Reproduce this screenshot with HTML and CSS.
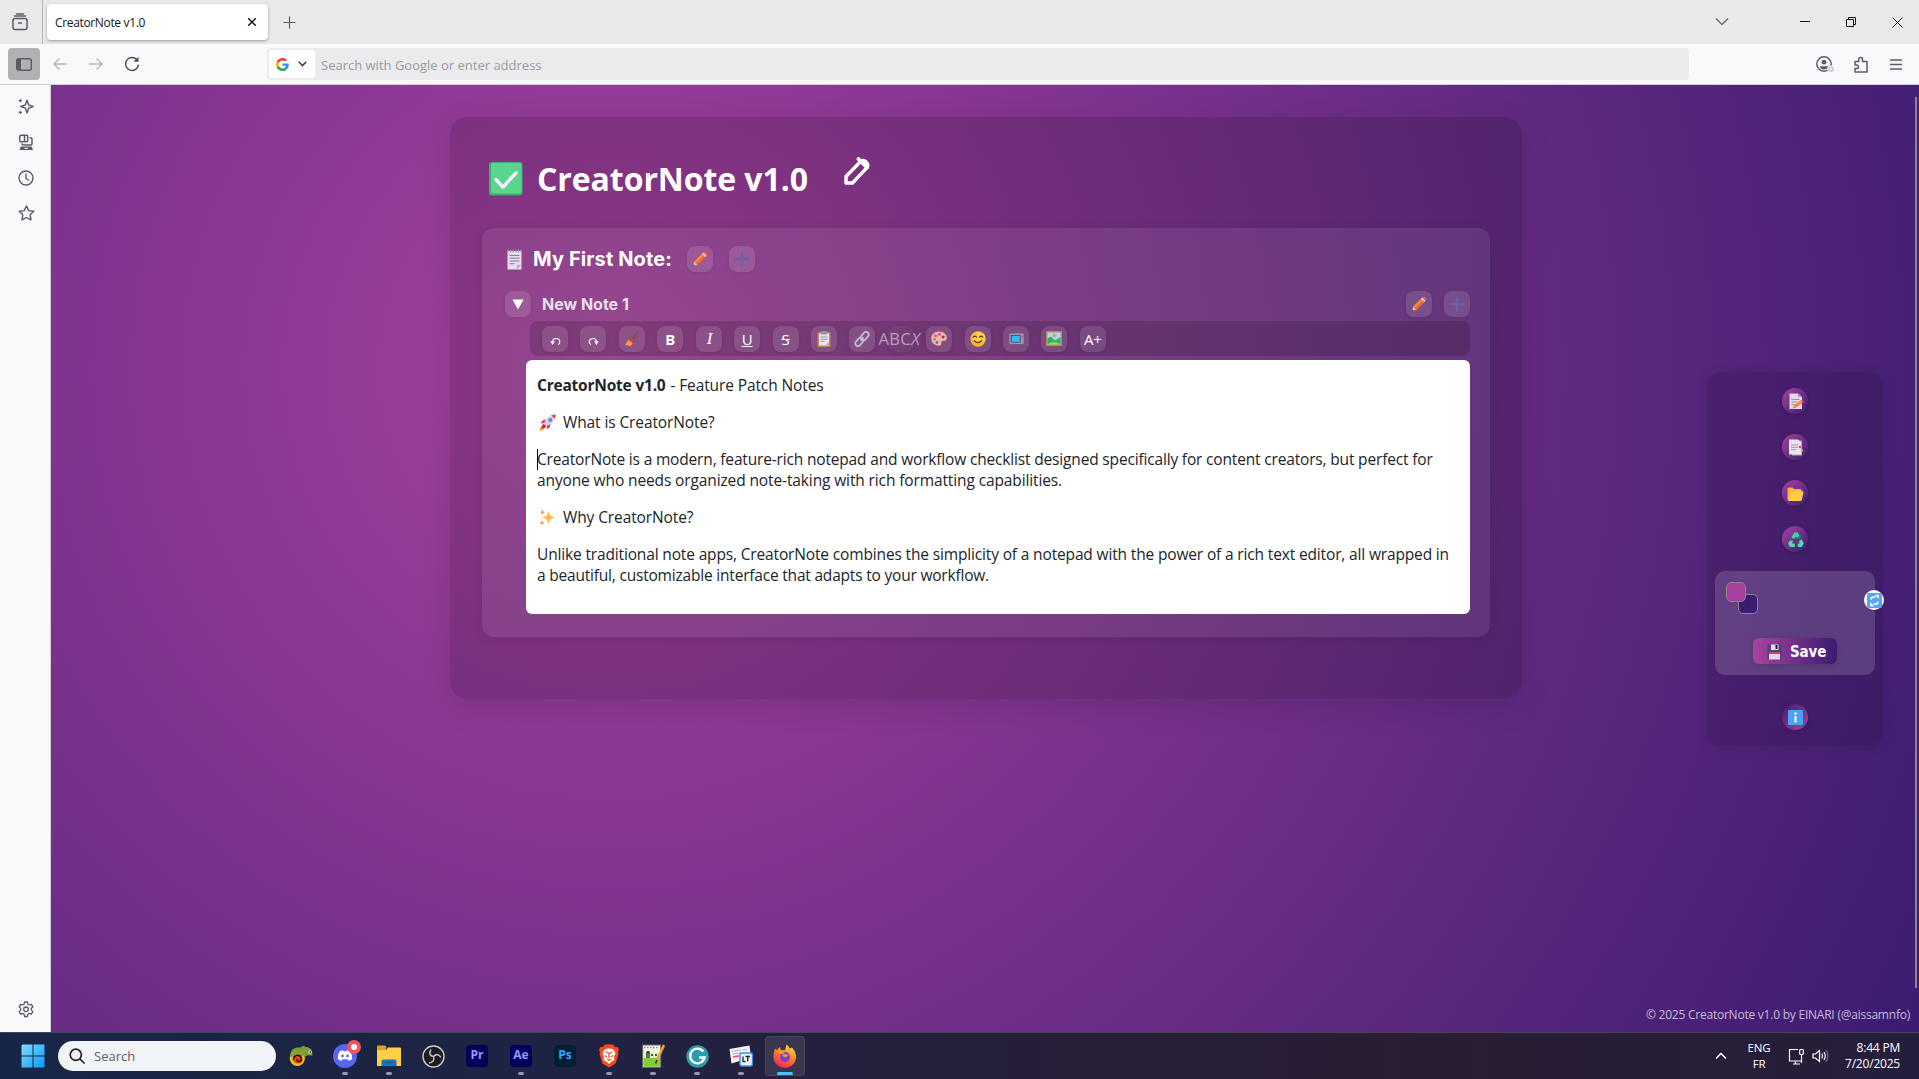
FILE: index.html
```html
<!DOCTYPE html>
<html lang="en">
<head>
<meta charset="utf-8">
<title>CreatorNote v1.0</title>
<link rel="stylesheet" href="styles.css">
</head>
<body>
<svg width="0" height="0" class="defs">
  <defs>
    <symbol id="pencil" viewBox="0 0 16 16"><path d="M1 15l1.200-4.400 3.300 3.200z" fill="#f5c08a"/><path d="M2.200 10.600L10 2.800l3.300 3.300-7.800 7.700z" fill="#ff8a3c"/><path d="M3.800 12.200l7.900-7.800 1.600 1.700-7.800 7.700z" fill="#e86c22"/><path d="M10 2.800l1.300-1.300 3.300 3.300-1.300 1.300z" fill="#e6dbe8"/><path d="M11.300 1.500c1-1 2-1 2.900-.2.900.9 1.200 2 .4 3.500z" fill="#fb5a55"/><path d="M1 15l.5-1.700 1.200 1.200z" fill="#3a2740"/></symbol>
    <symbol id="plus" viewBox="0 0 16 16"><path d="M8 1.500v13M1.500 8h13" stroke="#6a62a8" stroke-width="2.300" stroke-linecap="round"/></symbol>
  </defs>
</svg>
<header class="tabbar">
  <div class="tab-tools"><svg width="16" height="18" viewBox="0 0 16 18" fill="none" stroke="#5b5b66" stroke-width="1.500" stroke-linecap="round"><rect x="1" y="5.500" width="14" height="11" rx="2"/><path d="M2.500 3h11M4.500 .9h7M6.500 10h3"/></svg></div>
  <div class="tab"><span class="tab-title">CreatorNote v1.0</span><svg width="10" height="10" viewBox="0 0 10 10" stroke="#15141a" stroke-width="1.500"><path d="M1.200 1.200l7.600 7.600M8.800 1.200L1.200 8.800"/></svg></div>
  <svg class="new-tab" width="13" height="13" viewBox="0 0 13 13" stroke="#5b5b66" stroke-width="1.200"><path d="M6.500 .5v12M.5 6.500h12"/></svg>
  <div class="win-ctl">
    <svg width="14" height="10" viewBox="0 0 14 10" fill="none" stroke="#6b6b75" stroke-width="1.400"><path d="M1 1.500l6 6 6-6"/></svg>
    <svg class="c-min" width="10" height="10" viewBox="0 0 10 10" stroke="#15141a"><path d="M0 4.500h10"/></svg>
    <svg class="c-max" width="11" height="11" viewBox="0 0 11 11" fill="none" stroke="#15141a"><path d="M.5 2.500h7v7h-7zM2.500 2.500v-2h7v7h-2"/></svg>
    <svg class="c-close" width="11" height="11" viewBox="0 0 11 11" stroke="#15141a"><path d="M.5 .5l10 10M10.500 .5l-10 10"/></svg>
  </div>
</header>
<nav class="navbar">
  <div class="side-toggle"><svg width="16" height="13" viewBox="0 0 16 13"><rect x=".7" y=".7" width="14.600" height="11.600" rx="2" fill="none" stroke="#5b5b66" stroke-width="1.400"/><path d="M1 1h4v11H1z" fill="#5b5b66"/></svg></div>
  <svg class="back" width="14" height="12" viewBox="0 0 14 12" fill="none" stroke="#b5b5bb" stroke-width="1.400"><path d="M14 6H1M6.500 .6L1 6l5.500 5.400"/></svg>
  <svg class="fwd" width="14" height="12" viewBox="0 0 14 12" fill="none" stroke="#b5b5bb" stroke-width="1.400"><path d="M0 6h13M7.500 .6L13 6l-5.500 5.400"/></svg>
  <svg class="reload" width="16" height="16" viewBox="0 0 16 16" fill="none" stroke="#4c4c57" stroke-width="1.400"><path d="M12.600 3.400A6.500 6.500 0 1 0 14.500 8.600"/><path d="M14.500 .8v5h-5z" fill="#4c4c57" stroke="none"/></svg>
  <div class="urlbar">
    <div class="engine">
      <svg width="13" height="13" viewBox="0 0 48 48"><path fill="#ea4335" d="M24 9.500c3.500 0 6.700 1.200 9.200 3.600l6.900-6.900C35.900 2.400 30.500 0 24 0 14.600 0 6.500 5.400 2.600 13.200l8 6.200C12.400 13.700 17.700 9.500 24 9.500z"/><path fill="#4285f4" d="M47 24.500c0-1.600-.2-3.100-.4-4.500H24v9h12.900c-.6 3-2.300 5.500-4.800 7.200l7.700 6C44.400 38 47 31.800 47 24.500z"/><path fill="#fbbc05" d="M10.500 28.600a14.500 14.500 0 0 1 0-9.200l-8-6.200a24 24 0 0 0 0 21.600z"/><path fill="#34a853" d="M24 48c6.500 0 12-2.100 15.900-5.800l-7.700-6c-2.200 1.500-4.900 2.300-8.200 2.300-6.300 0-11.600-4.200-13.500-9.900l-8 6.200C6.500 42.600 14.600 48 24 48z"/></svg>
      <svg width="9" height="6" viewBox="0 0 9 6" fill="none" stroke="#3a3a44" stroke-width="1.500"><path d="M.7 .8l3.800 3.800L8.300 .8"/></svg>
    </div>
    <span class="placeholder">Search with Google or enter address</span>
  </div>
  <div class="nav-right">
    <svg width="19" height="17" viewBox="0 0 19 17"><circle cx="8" cy="8" r="7.200" fill="none" stroke="#5b5b66" stroke-width="1.500"/><circle cx="8" cy="6.200" r="2.400" fill="#5b5b66"/><path d="M3.800 10.200h8.400c-.4 2.200-2 3.300-4.200 3.300s-3.800-1.100-4.200-3.300z" fill="#5b5b66"/><circle cx="15" cy="13" r="3.600" fill="#f9f9fb"/><circle cx="15" cy="13" r="2.200" fill="none" stroke="#c3c3c8" stroke-width="1.300"/></svg>
    <svg width="14" height="17" viewBox="0 0 14 17" fill="none" stroke="#5b5b66" stroke-width="1.500" stroke-linejoin="round"><path d="M1 5.500h3.700V3.300a1.900 1.900 0 0 1 3.800 0v2.200H13V16H1v-3.500h1.700a1.800 1.800 0 0 0 0-3.600H1z"/></svg>
    <svg width="12" height="11" viewBox="0 0 12 11" stroke="#5b5b66" stroke-width="1.300"><path d="M0 1h12M0 5.500h12M0 10h12"/></svg>
  </div>
</nav>
<div class="content">
  <aside class="rail">
    <svg width="16" height="17" viewBox="0 0 16 17" fill="none" stroke="#5b5b66" stroke-width="1.400" stroke-linejoin="round"><path d="M9 2.200l1.600 4.600 4.600 1.700-4.600 1.700L9 14.900l-1.600-4.700-4.600-1.700 4.600-1.700z"/><path d="M2.300 1v3.200M.7 2.600h3.200M2.300 12.800V16M.7 14.400h3.200" stroke-width="1.100"/></svg>
    <svg width="16" height="17" viewBox="0 0 16 17" fill="none" stroke="#5b5b66" stroke-width="1.500"><rect x="1.700" y="1.200" width="8" height="6.500" rx="1.200"/><path d="M6.500 1v7M11.500 3.800h.7c1 0 1.800.6 1.800 1.700V9.500q0 1.500-1.500 1.500H6Q4 11 3.700 9.500"/><path d="M1.500 16l1.300-3.500h10.900L15 16z" fill="#5b5b66" stroke="none"/><path d="M6.500 14.300h3.500" stroke="#f9f9fb" stroke-width="1"/></svg>
    <svg width="16" height="16" viewBox="0 0 16 16" fill="none" stroke="#5b5b66" stroke-width="1.400"><circle cx="8" cy="8" r="7"/><path d="M8 3.500V8.500l3 2"/></svg>
    <svg width="17" height="16" viewBox="0 0 17 16" fill="none" stroke="#5b5b66" stroke-width="1.400" stroke-linejoin="round"><path d="M8.500 1l2.300 4.600 5 .7-3.600 3.500.8 5.100-4.500-2.400L4 14.900l.8-5.100L1.200 6.300l5-.7z"/></svg>
    <svg class="gear" width="16" height="17" viewBox="0 0 16 17" fill="none" stroke="#5b5b66" stroke-width="1.300" stroke-linejoin="round"><path d="M6.600 1h2.800l.5 2.200 1.400.8 2.100-.7 1.500 2.500-1.600 1.500v1.800l1.600 1.500-1.500 2.500-2.100-.7-1.400.8-.5 2.300H6.600l-.5-2.300-1.400-.8-2.100.7-1.500-2.500 1.600-1.500V7.300L1.100 5.800l1.500-2.500 2.100.7 1.400-.8z"/><circle cx="8" cy="8.300" r="2.300"/></svg>
  </aside>
  <main class="page">
    <section class="card">
      <div class="title-row">
        <svg width="34" height="34" viewBox="0 0 34 34"><rect width="33.500" height="33.500" rx="3" fill="#3fae73"/><rect x="2" y="1" width="30.500" height="30.500" rx="2" fill="#58d68d"/><path d="M7 17.500l7 7.500L27 11" fill="none" stroke="#f7effa" stroke-width="3.400" stroke-linecap="round" stroke-linejoin="round"/></svg>
        <h1>CreatorNote v1.0</h1>
        <svg class="edit-title" width="26" height="28" viewBox="0 0 26 28" fill="none" stroke="#fff" stroke-width="3.400" stroke-linejoin="round" stroke-linecap="round"><path d="M2 26v-6.500L16.500 4.500c2-1.500 4-1 5.600.4 2 1.900 2.200 4 .6 6L8.500 26z"/><path d="M14.500 2l8.500 8.500" stroke-width="3.800"/></svg>
      </div>
      <div class="notes">
        <div class="note-row">
          <svg width="15" height="21" viewBox="0 0 15 21"><rect x=".5" y="2" width="14" height="18.500" fill="#e6dcef"/><path d="M1 .5v3M3.600 .5v3M6.200 .5v3M8.800 .5v3M11.400 .5v3M14 .5v3" stroke="#a99cb4" stroke-width="1.100"/><path d="M2.500 6.500h10M2.500 9.200h10M2.500 12h10M2.500 14.700h5" stroke="#8b7d99"/><path d="M14.500 16l-4.500 4.500V16z" fill="#bcaec8"/></svg>
          <h2>My First Note:</h2>
          <button class="ib"><svg width="16" height="16"><use href="#pencil"/></svg></button>
          <button class="ib gap16"><svg width="16" height="16"><use href="#plus"/></svg></button>
        </div>
        <div class="sub-row">
          <button class="ib"><svg width="12" height="11" viewBox="0 0 12 11"><path d="M.5 .5h11L6 10.500z" fill="#fff"/></svg></button>
          <h3>New Note 1</h3>
          <button class="ib push"><svg width="16" height="16"><use href="#pencil"/></svg></button>
          <button class="ib gap12"><svg width="16" height="16"><use href="#plus"/></svg></button>
        </div>
        <div class="toolbar">
          <button class="ib arrow"><svg width="11" height="9" viewBox="0 0 11 9" fill="none" stroke="#fff" stroke-width="1.100"><path d="M2.500 5C2.700 2.700 4.200 1.500 6 1.500c2.200 0 3.800 1.500 3.800 3.400 0 1.200-.7 2.100-1.800 2.600"/><path d="M.3 4.300h4.600L2.500 8z" fill="#fff" stroke="none"/></svg></button>
          <button class="ib arrow"><svg width="11" height="9" viewBox="0 0 11 9" fill="none" stroke="#fff" stroke-width="1.100"><path d="M8.500 5C8.300 2.700 6.800 1.500 5 1.500 2.800 1.500 1.200 3 1.200 4.900c0 1.200.7 2.100 1.800 2.600"/><path d="M10.700 4.300H6.100L8.500 8z" fill="#fff" stroke="none"/></svg></button>
          <button class="ib"><svg width="14" height="15" viewBox="0 0 14 15"><path d="M13 .7L7.500 8" stroke="#8a4f45" stroke-width="1.600"/><path d="M5 7l4 3-1.500 2.500L3 9z" fill="#c0492f"/><path d="M3.500 9l4.300 3.300L5.500 15 0 14z" fill="#ff9a4a"/></svg></button>
          <button class="ib t-b">B</button>
          <button class="ib t-i">I</button>
          <button class="ib t-u">U</button>
          <button class="ib t-s">S</button>
          <button class="ib"><svg width="14" height="16" viewBox="0 0 14 16"><rect x=".5" y="1" width="13" height="15" rx="1" fill="#c98258"/><rect x="2" y="2.500" width="10" height="12" fill="#eae2f2"/><rect x="4" y="0" width="6" height="3.500" rx="1" fill="#9a93a8"/><path d="M3.500 6h7M3.500 8.200h7M3.500 10.400h4" stroke="#9b90a8" stroke-width=".9"/><path d="M12 11v3.500H8.500z" fill="#b6a9c4"/></svg></button>
          <button class="ib"><svg width="16" height="16" viewBox="0 0 16 16" fill="none" stroke="#c3b8cf" stroke-width="1.800"><rect x="6.300" y="2.300" width="9" height="5.400" rx="2.700" transform="rotate(-50 10.800 5)"/><rect x=".7" y="8.300" width="9" height="5.400" rx="2.700" transform="rotate(-50 5.200 11)"/><path d="M6.500 9.800l3-3.600"/></svg></button>
          <button class="ib t-abc"><span>ABC<i>X</i></span></button>
          <button class="ib"><svg width="16" height="15" viewBox="0 0 16 15"><path d="M8 .5C12.500 .5 15.800 3.400 15.800 7c0 2-1.500 3-3.300 2.800-1.700-.2-2.600.6-2.300 2.200.3 1.700-.5 2.600-2.200 2.600C3.500 14.500 .3 11.500 .3 7.500S3.500 .5 8 .5z" fill="#ffb59c"/><circle cx="8.500" cy="3.300" r="1.500" fill="#b24fd0"/><circle cx="4.600" cy="4.800" r="1.500" fill="#f0439a"/><circle cx="3.600" cy="8.300" r="1.400" fill="#26b7c4"/><circle cx="6" cy="11.500" r="1.400" fill="#3f6df0"/><circle cx="12.200" cy="6" r="1.500" fill="#7c3a6c"/></svg></button>
          <button class="ib"><svg width="16" height="16" viewBox="0 0 16 16"><circle cx="8" cy="8" r="7.700" fill="#fcb32c"/><ellipse cx="9" cy="6.500" rx="6.300" ry="5.800" fill="#ffd049"/><path d="M3.300 6.200q1.600-2.200 3.200 0M9.500 6.200q1.600-2.200 3.200 0M4.300 9.700q3.700 4 7.400 0" fill="none" stroke="#53311f" stroke-width="1.200" stroke-linecap="round"/></svg></button>
          <button class="ib"><svg width="15" height="15" viewBox="0 0 15 15"><path d="M5 0l2.500 3L10 0M3 12.500l-1 2.200M12 12.500l1 2.200" stroke="#6e6880" fill="none"/><rect x=".3" y="2.500" width="14.400" height="10.500" rx="1" fill="#9b97a8"/><rect x="1.800" y="4" width="9.700" height="7.500" rx=".6" fill="#25456c"/><rect x="2.600" y="4.700" width="8.200" height="6.200" fill="#37b6f2"/><circle cx="13" cy="5.500" r=".8" fill="#e8456b"/></svg></button>
          <button class="ib"><svg width="16" height="15" viewBox="0 0 16 15"><rect width="16" height="15" fill="#c98258"/><rect x="1.500" y="1.500" width="13" height="12" fill="#a6dcf9"/><circle cx="8.500" cy="4.500" r="2" fill="#f5a72a"/><path d="M1.500 7.500l3.500-2 4 4 5.500-3.500v7.500h-13z" fill="#2fb365"/><path d="M1.500 13.500q6.500-4.500 13 0z" fill="#a5e04e"/></svg></button>
          <button class="ib t-a"><span>A+</span></button>
        </div>
        <article class="editor">
          <p><b class="m-b">CreatorNote v1.0</b><span class="m-f"> - Feature Patch Notes</span></p>
          <p><svg width="17" height="17" viewBox="0 0 17 17"><path d="M16.500 .5c-4 0-7 1.500-9.500 5L4.500 9l3.500 3.500 3.500-2.300C15 7.600 16.600 4.500 16.500 .5z" fill="#d9d3e4"/><path d="M16.500 .5c-1.700 0-3 .3-4.300.9l3.500 3.400c.5-1.300.8-2.700.8-4.300zM6.800 5.500C4 5.500 2.500 7 1.800 9.500l3.500-.4zM11.500 10.200c0 2.900-1.500 4.300-4 5l.5-3.500z" fill="#f0386b"/><circle cx="11.200" cy="5.900" r="2" fill="#4a8ee8"/><path d="M4.500 10.500l2 2C5.500 15 3.500 16.500 .5 16.800c.3-3 1.500-5 4-6.300z" fill="#ff9b2f"/><path d="M4.500 9.500l3 3-3.500 2.200-1.500-1.500z" fill="#c9254f"/></svg><span class="m-q">What is CreatorNote?</span></p>
          <p class="caret"><span class="m-l1">CreatorNote is a modern, feature-rich notepad and workflow checklist designed specifically for content creators, but perfect for</span><br><span class="m-l2">anyone who needs organized note-taking with rich formatting capabilities.</span></p>
          <p><svg width="17" height="17" viewBox="0 0 17 17"><path d="M9.500 1.500c.7 4 2 6 6.500 7-4.500 1-5.800 3-6.500 7-.7-4-2-6-6.500-7 4.500-1 5.800-3 6.500-7z" fill="#ffb84d"/><path d="M3.500 .5q.4 2.200 2.500 2.800-2.100.6-2.500 2.700Q3.100 3.900 1 3.300 3.100 2.700 3.500 .5zM3 11q.4 2.200 2.500 2.800-2.100.6-2.500 2.700-.4-2.100-2.500-2.700Q2.600 13.200 3 11z" fill="#ff9d5c"/></svg><span class="m-q">Why CreatorNote?</span></p>
          <p><span class="m-l3">Unlike traditional note apps, CreatorNote combines the simplicity of a notepad with the power of a rich text editor, all wrapped in</span><br><span class="m-l4">a beautiful, customizable interface that adapts to your workflow.</span></p>
        </article>
      </div>
    </section>
    <aside class="panel">
      <button class="rb"><svg width="16" height="17" viewBox="0 0 16 17"><path d="M1.500 .5h8.500l4 3.500v12h-12.500z" fill="#e2dcea"/><path d="M10 .5v3.500h4z" fill="#a79db5"/><path d="M3.500 6.500h8M3.500 9h6M3.500 11.500h4" stroke="#a095ae"/><path d="M4.500 15.500l1-3 7-5 2 2.500-7 5z" fill="#ff8a3c"/><path d="M12.500 7.500l1.500-1 2 2.300-1.500 1.200z" fill="#fb4f55"/></svg></button>
      <button class="rb"><svg width="16" height="17" viewBox="0 0 16 17"><path d="M4 1.500h10v15H4z" fill="#b4aabf"/><path d="M1 .5h9l3 3v12H1z" fill="#ece6f3"/><path d="M3 6h7M3 8.300h7M3 10.600h5" stroke="#a095ae"/><circle cx="12" cy="8" r="1.300" fill="#e8456b"/><circle cx="13.800" cy="11.500" r="1.300" fill="#f0b030"/></svg></button>
      <button class="rb"><svg class="folder" width="17" height="15" viewBox="0 0 17 15"><path d="M.5 2q0-1.500 1.500-1.500h3.500L7 2h6.500q1 0 1 1v10H.5z" fill="#f9b044"/><path d="M4.500 4.200h11q1.200 0 1 1.200l-1.700 7.600q-.2 1-1.200 1H2q-1 0-.8-1z" fill="#ffcb4d"/></svg></button>
      <button class="rb"><svg class="folder" width="16" height="16" viewBox="0 0 16 16" fill="none" stroke-width="3.400"><path d="M4.800 6.200L7.300 2.200h1.400l2 3.600" stroke="#3fd69b"/><path d="M12.300 8.300l1.500 3.200-1 1.700H9.500" stroke="#4ae0a6"/><path d="M6.800 13.200H3l-.9-1.700 1.500-3.200" stroke="#4ae0a6"/><path d="M9.200 6.300h3.500V3.500zM9.500 10.500v4.500M1.500 8.300l3.800-.3" stroke="#1f7a68" stroke-width="1.200"/></svg></button>
      <div class="theme">
        <div class="swatches"><i class="sw a"></i><i class="sw b"></i></div>
        <button class="reset"><svg width="15" height="15" viewBox="0 0 15 15"><rect width="15" height="15" rx="1.500" fill="#56a5f5"/><path d="M4 6.500Q4 4 6.500 4H8.500M11 8.500Q11 11 8.500 11H6.500" fill="none" stroke="#fff" stroke-width="1.700"/><path d="M7.800 1.700h4v4zM7.200 13.300h-4v-4z" fill="#fff"/></svg></button>
        <button class="save"><svg width="15" height="16" viewBox="0 0 15 16"><path d="M.5 .5h13l1 1V15.500H.5z" fill="#54407f"/><rect x="4" y=".5" width="7.500" height="5.500" fill="#e3ddea"/><rect x="8.500" y="1" width="2" height="4" fill="#241a3c"/><rect x="2" y="8" width="11" height="7.500" fill="#e3d9ec"/><rect x="2" y="8" width="11" height="2" fill="#e23c4f"/></svg><span>Save</span></button>
      </div>
      <button class="rb info"><svg width="15" height="15" viewBox="0 0 15 15"><rect width="15" height="15" rx="1" fill="#4ba3f5"/><path d="M7.500 6v6.500" stroke="#fff" stroke-width="2"/><circle cx="7.500" cy="3.500" r="1.300" fill="#fff"/></svg></button>
    </aside>
    <div class="copyright">© 2025 CreatorNote v1.0 by EINARI (@aissamnfo)</div>
    <div class="scroll"></div>
  </main>
</div>
<footer class="taskbar">
  <svg class="start" width="24" height="24" viewBox="0 0 24 24"><defs><linearGradient id="win" x1="0" y1="0" x2="1" y2="1"><stop offset="0" stop-color="#7fdcff"/><stop offset="1" stop-color="#1098f7"/></linearGradient></defs><path d="M1.500 .5H11.500V11.500H.5V1.500zM12.500 .5h11v11h-11zM.5 12.500h11v11H.5zM12.500 12.500h11v11h-11z" fill="url(#win)"/></svg>
  <div class="search"><svg width="16" height="16" viewBox="0 0 16 16" fill="none" stroke="#222" stroke-width="1.700" stroke-linecap="round"><circle cx="6.800" cy="6.800" r="5.600"/><path d="M11 11l4 4"/></svg><span>Search</span></div>
  <div class="apps">
    <div class="app"><svg width="24" height="22" viewBox="0 0 24 22"><path d="M1.500 9C2 4 6 2 11 2.500L15 .5l1 1.500c4 0 6.500 2 7 4.500l.5 4-5-.3-2 1.300-3-1.500z" fill="#7d9c35"/><circle cx="8.300" cy="13.500" r="7.600" fill="#e8c21c"/><path d="M.8 12C1 6.500 5 4.300 9.500 5s6 3 6 6z" fill="#8aa030"/><circle cx="8.800" cy="14" r="4.600" fill="#e8401c"/><path d="M4.500 15c-1-5.500 8-6.500 8-1 0 3.500-5 3.500-4.500.3" fill="none" stroke="#200" stroke-width="1.400"/><circle cx="21" cy="7" r="1.700" fill="#ddd"/><circle cx="21.200" cy="7" r=".8"/></svg></div>
    <div class="app on"><svg class="discord" width="28" height="28" viewBox="0 0 28 28"><circle cx="12" cy="16" r="12" fill="#5865f2"/><path d="M6.500 11.500q2-1.200 3.500-1.200l.5.900h3l.5-.9q1.500 0 3.500 1.200 2 3.500 1.700 7.500-1.700 1.600-3.700 1.800l-.9-1.600h-5.200l-.9 1.600q-2-.2-3.700-1.800-.3-4 1.700-7.500z" fill="#fff"/><circle cx="9.500" cy="16" r="1.400" fill="#5865f2"/><circle cx="14.500" cy="16" r="1.400" fill="#5865f2"/><circle cx="21" cy="7" r="7" fill="#f2555a"/><circle cx="21" cy="7" r="3" fill="#fff"/></svg></div>
    <div class="app on"><svg width="24" height="22" viewBox="0 0 24 22"><path d="M0 1.500Q0 .5 1 .5h7l2 2H9v4H0z" fill="#e0a012"/><path d="M0 5h9l2-2.500h12q1 0 1 1V21H0z" fill="#ffcf45"/><path d="M4.500 21v-4.500q0-2 2-2h11q2 0 2 2V21z" fill="#1275c8"/><path d="M8 17.500h8" stroke="#0d5596"/></svg></div>
    <div class="app"><svg width="23" height="23" viewBox="0 0 23 23"><circle cx="11.500" cy="11.500" r="10.500" fill="#1c1b20" stroke="#c9c9cd" stroke-width="1.400"/><path d="M11.500 11.500c-4-.5-4.500-4-2.500-7M11.500 11.500c2.500-3.200 6-2 7.300 1M11.500 11.500c1.500 3.800-1 6.300-4.500 6.500" fill="none" stroke="#b9b9bd" stroke-width="1.600"/></svg></div>
    <div class="app"><span class="adobe pr">Pr</span></div>
    <div class="app on"><span class="adobe ae">Ae</span></div>
    <div class="app"><span class="adobe ps">Ps</span></div>
    <div class="app on"><svg width="20" height="24" viewBox="0 0 20 24"><path d="M6 .5h8L16 3l2.500 0L20 6l-1 2 .5 2-3 9.500L10 23.500 3.500 19.500 .5 10 1 8 0 6l1.500-3L4 3z" fill="#fb4b1e"/><path d="M10 4.500l4 .5 2.500 4-1.500 4 .5 3-3 1.500L10 20l-2.500-2.500-3-1.500.5-3-1.500-4L6 5z" fill="#fff"/><path d="M7 8l3 1.500L13 8M10 9v5M6 11.500l2 1.500M14 11.500L12 13M8 15l2 1.200L12 15" stroke="#fb4b1e" stroke-width="1.300" fill="none"/></svg></div>
    <div class="app on"><svg width="23" height="24" viewBox="0 0 23 24"><rect x=".7" y="1" width="18" height="22.500" fill="#f4f6ec" stroke="#666"/><rect x="1.500" y="13" width="16.400" height="9.800" fill="#7fce2d"/><rect x="1.500" y="8" width="16.400" height="6" fill="#dcf2c0"/><path d="M5 14V8h2v6M9 11h2M13 11h2" stroke="#222" stroke-width="1.300" fill="none"/><path d="M22 1l-7 15" stroke="#e8a825" stroke-width="2.600"/><path d="M15 16l-1.500 3.500" stroke="#333" stroke-width="1.500"/><path d="M2 3.500h15" stroke="#888" stroke-dasharray="1.500 1.500" stroke-width="1.500"/></svg></div>
    <div class="app on"><svg width="23" height="23" viewBox="0 0 23 23"><circle cx="11.500" cy="11.500" r="11.200" fill="#2a9dab"/><path d="M17.300 6.500A7.300 7.300 0 1 0 18.600 12.500H13" fill="none" stroke="#fff" stroke-width="2.300"/></svg></div>
    <div class="app on"><svg width="24" height="22" viewBox="0 0 24 22"><path d="M.5 4l20-3.500 1.500 12-19.500 6z" fill="#f3f1f6"/><path d="M3 6.500l9-1.500M3.500 9l8-1.200M14 5l4-.6" stroke="#b9b3c4"/><path d="M4 12l6-1" stroke="#f04a6a" stroke-width="1.600"/><rect x="11" y="8" width="12.500" height="13" rx="2" fill="#e9f3ff" stroke="#3c8fe8" stroke-width="1.400"/><path d="M14 11.500v5h2.500M16.500 11.500h4.500M18.700 11.500v5" stroke="#222" stroke-width="1.300" fill="none"/></svg></div>
    <div class="app on active"><svg width="24" height="24" viewBox="0 0 24 24"><defs><linearGradient id="ff" x1=".8" y1="0" x2=".3" y2="1"><stop offset="0" stop-color="#ffe14a"/><stop offset=".45" stop-color="#ff8a1f"/><stop offset="1" stop-color="#f5225e"/></linearGradient></defs><path d="M2 4.500l2 1.800L6.500 3l1.500 3 4 .2L13.500 .5q2 1 3 4l2.500-1q3.500 3.500 4 8C23.500 18.500 18.500 23.700 12 23.700S.5 19 .5 12.500Q.5 8 2 4.500z" fill="url(#ff)"/><circle cx="12" cy="13" r="5" fill="#7a3fd6"/><path d="M3 8.500c3-2 5-1.500 8.500.5l-2 2.500c2 2.500 5 1.500 6-.5" fill="#ff9a24"/></svg></div>
  </div>
  <div class="tray">
    <svg width="12" height="8" viewBox="0 0 12 8" fill="none" stroke="#fff" stroke-width="1.500"><path d="M1 6.500l5-5 5 5"/></svg>
    <div class="lang">ENG<br>FR</div>
    <svg class="net" width="17" height="17" viewBox="0 0 17 17" fill="none" stroke="#fff" stroke-width="1.200"><path d="M10 1.500H1.500V13h12M5 16h7M7.500 13v3"/><rect x="11.700" y="1.500" width="3.600" height="5" rx=".8"/><path d="M13.500 6.500V15"/></svg>
    <svg class="vol" width="17" height="14" viewBox="0 0 17 14" fill="none" stroke="#fff" stroke-width="1.200"><path d="M1 5h2.500L7.500 1.500v11L3.500 9H1z"/><path d="M9.800 4.700q1.500 2.300 0 4.600M11.900 3q2.700 4 0 8"/><path d="M13.900 1.200q4 5.800 0 11.600" stroke="#77718a"/></svg>
    <div class="clock">8:44 PM<br>7/20/2025</div>
  </div>
</footer>
</body>
</html>
```
FILE: styles.css
```css
* { box-sizing: border-box; }
body { margin: 0; width: 1919px; height: 1079px; overflow: hidden; display: flex; flex-direction: column; font-family: "Open Sans", "Noto Sans", sans-serif; }
.defs { position: absolute; }
svg { display: block; flex: none; }
h1, h2, h3, p { margin: 0; }
button { border: 0; padding: 0; margin: 0; font: inherit; color: inherit; }

.tabbar { height: 44px; flex: none; background: #e9e9eb; display: flex; align-items: center; }
.tab-tools { width: 43px; height: 44px; border-right: 1px solid #b4b4b8; display: flex; align-items: center; padding-left: 12px; }
.tab { margin-left: 4px; width: 221px; height: 36px; background: #fff; border-radius: 4px; box-shadow: 0 1px 3px rgba(0,0,0,.35); display: flex; align-items: center; justify-content: space-between; padding: 0 11px 0 8px; font-size: 12px; letter-spacing: -.346px; color: #15141a; }
.new-tab { margin-left: 15px; }
.win-ctl { margin-left: auto; display: flex; align-items: center; padding-right: 16px; }
.c-min { margin-left: 71px; }
.c-max { margin-left: 36px; }
.c-close { margin-left: 35px; }

.navbar { height: 41px; flex: none; background: #f9f9fb; border-bottom: 1px solid #cfcfd4; display: flex; align-items: center; }
.side-toggle { width: 32px; height: 32px; margin-left: 8px; border-radius: 4px; background: #b1b1b4; display: flex; align-items: center; justify-content: center; }
.back { margin-left: 13px; }
.fwd { margin-left: 22px; }
.reload { margin-left: 21px; }
.urlbar { margin-left: 127px; width: 1422px; height: 32px; background: #ebebed; border-radius: 4px; display: flex; align-items: center; padding-left: 2px; }
.engine { width: 46px; height: 28px; background: #fff; border-radius: 3px; display: flex; align-items: center; gap: 9px; padding-left: 7px; }
.placeholder { margin-left: 6px; padding-top: 2px; font-size: 13px; color: #9a9aa0; white-space: nowrap; }
.nav-right { margin-left: auto; display: flex; align-items: center; padding-right: 17px; gap: 19px; }
.nav-right svg:last-child { margin-left: 3px; }

.content { flex: 1; display: flex; min-height: 0; }
.rail { width: 51px; background: #f9f9fb; border-right: 1px solid #cfcfd4; display: flex; flex-direction: column; align-items: center; gap: 19px; padding: 13px 0 14px 2px; }
.gear { margin-top: auto; }

.page { flex: 1; position: relative; background: radial-gradient(circle at 30% 30%, #a8429f, #3a1c71); }
.card { margin: 32px 0 0 399px; width: 1072px; height: 582px; padding: 0 32px; border-radius: 18px; background: rgba(0,0,0,.15); box-shadow: 0 8px 32px rgba(0,0,0,.12); color: #fff; }
.title-row { height: 111px; display: flex; padding: 45px 0 0 7px; }
h1 { margin-left: 14px; font-size: 32px; line-height: 34px; font-weight: 700; letter-spacing: -.08px; white-space: nowrap; }
.edit-title { margin: -5px 0 0 36px; }
.notes { height: 409px; border-radius: 12px; background: rgba(255,255,255,.08); box-shadow: 0 2px 12px rgba(0,0,0,.08); padding: 17px 20px 0 23px; }
.note-row { height: 28px; display: flex; align-items: center; padding-left: 2px; }
h2 { margin-left: 11px; font: 700 20px/28px Inter, sans-serif; letter-spacing: .113px; white-space: nowrap; }
.note-row .ib { margin-left: 15px; }
.note-row .gap16 { margin-left: 16px; }
.ib { width: 26px; height: 26px; border-radius: 8px; background: rgba(255,255,255,.12); box-shadow: 0 1px 4px rgba(0,0,0,.08); display: flex; align-items: center; justify-content: center; flex: none; font-size: 15px; line-height: 26px; color: #fff; }
.sub-row { margin-top: 18px; height: 26px; display: flex; align-items: center; }
h3 { margin-left: 11px; font: 700 16px/26px Inter, sans-serif; color: #eadfec; white-space: nowrap; }
.push { margin-left: auto; }
.gap12 { margin-left: 12px; }
.toolbar { margin: 4px 0 0 25px; height: 35px; border-radius: 8px; background: rgba(0,0,0,.15); display: flex; align-items: center; gap: 12.430px; padding-left: 12px; }
.arrow { padding-top: 5px; }
.t-b { font-weight: 700; font-family: "Noto Sans", sans-serif; }
.t-i { font-family: "Liberation Serif", serif; font-style: italic; font-size: 17px; padding-left: 2px; }
.t-u { text-decoration: underline; }
.t-s { text-decoration: line-through; }
.t-abc { background: rgba(255,255,255,.03); color: rgba(255,255,255,.5); font-size: 16.500px; letter-spacing: .4px; padding-right: 3px; }
.editor { margin: 4px 0 0 21px; height: 254px; border-radius: 6px; background: #fff; color: #212529; padding: 15px 11px; font-size: 15.500px; line-height: 21px; }
.editor p { margin-bottom: 16px; white-space: nowrap; }
.editor p svg { display: inline-block; vertical-align: -3px; margin: 0 7px 0 2px; }
.m-b { letter-spacing: -.211px; }
.m-f { letter-spacing: -.113px; margin-left: 1px; }
.m-q { letter-spacing: -.11px; }
.m-l1 { letter-spacing: -.169px; }
.m-l2 { letter-spacing: -.12px; }
.m-l3 { letter-spacing: -.151px; }
.m-l4 { letter-spacing: -.2px; }
.caret { position: relative; }
.caret::before { content: ""; position: absolute; left: 0; top: 0; width: 1px; height: 21px; background: #000; }

.panel { position: absolute; left: 1656px; top: 287px; width: 176px; height: 374px; border-radius: 14px; background: rgba(0,0,0,.12); box-shadow: 0 2px 14px rgba(0,0,0,.1); display: flex; flex-direction: column; align-items: center; padding-top: 16px; gap: 20px; }
.rb { width: 26px; height: 26px; border-radius: 50%; background: linear-gradient(135deg, #a8429f, #3a1c71); box-shadow: 0 1px 4px rgba(0,0,0,.2); display: flex; align-items: center; justify-content: center; flex: none; padding-left: 1px; }
.folder { margin-top: 2px; }
.info { margin-top: 9px; background: linear-gradient(315deg, #a8429f, #3a1c71); }
.theme { position: relative; margin-top: -1px; width: 160px; height: 104px; border-radius: 10px; background: rgba(255,255,255,.15); padding: 11px 0 0 11px; color: #fff; }
.swatches { display: flex; height: 56px; }
.sw { width: 20px; height: 20px; border: 1px solid #8a8488; border-radius: 5px; }
.a { background: #a8429f; z-index: 1; }
.b { background: #3a1c71; margin: 12px 0 0 -8px; }
.reset { position: absolute; left: 149px; top: 19px; width: 20px; height: 20px; border-radius: 50%; background: #fff; display: flex; align-items: center; justify-content: center; padding-top: 1px; }
.save { margin-left: 27px; width: 84px; height: 26px; border-radius: 6px; background: linear-gradient(90deg, #a8429f, #3a1c71); display: flex; align-items: center; padding: 1px 0 0 14px; gap: 8px; box-shadow: 0 1px 6px rgba(0,0,0,.15); font: 700 15px/28px "DejaVu Sans Condensed", "DejaVu Sans", sans-serif; font-stretch: condensed; letter-spacing: -.1px; color: #fff; }
.copyright { position: absolute; right: 9px; bottom: 7px; font-size: 12px; line-height: 20px; letter-spacing: -.23px; color: rgba(255,255,255,.7); white-space: nowrap; }
.scroll { position: absolute; right: 2px; top: 12px; width: 2px; height: 891px; background: #8b8590; }

.taskbar { height: 47px; flex: none; border-top: 1px solid #4a4458; background: linear-gradient(90deg, #172648, #1f2342 30%, #251f3b 45%, #2a1d33 75%, #251e3b); display: flex; align-items: center; color: #fff; }
.start { margin-left: 20.500px; }
.search { margin-left: 13.500px; width: 218px; height: 30px; border-radius: 15px; background: #f2f3f6; display: flex; align-items: center; padding-left: 11px; font-size: 13px; color: #5f5f64; }
.search span { margin-left: 9px; }
.apps { display: flex; margin-left: 5px; gap: 4px; }
.app { position: relative; width: 40px; height: 40px; border-radius: 4px; display: flex; align-items: center; justify-content: center; }
.discord { margin: -4px 0 0 4px; }
.on::after { content: ""; position: absolute; left: 17px; bottom: 1px; width: 6px; height: 3px; border-radius: 2px; background: #9a99a8; }
.active { background: rgba(255,255,255,.1); border: 1px solid rgba(255,255,255,.08); }
.active::after { left: 11px; bottom: 0; width: 16px; background: #4cc2ff; }
.adobe { width: 22px; height: 22px; border-radius: 4px; background: #00005b; color: #9999ff; font: 700 12px/20px "Open Sans", sans-serif; text-align: center; }
.ps { background: #001e36; color: #31a8ff; }
.tray { margin-left: auto; display: flex; align-items: center; padding-right: 19px; font-size: 12px; line-height: 16px; letter-spacing: -.2px; }
.lang { margin-left: 19px; text-align: center; width: 26px; font-size: 11.500px; }
.net { margin-left: 16px; }
.vol { margin-left: 7px; }
.clock { margin-left: 16px; width: 55px; text-align: right; white-space: nowrap; }
.clock, .lang { font-weight: 500; }
```
